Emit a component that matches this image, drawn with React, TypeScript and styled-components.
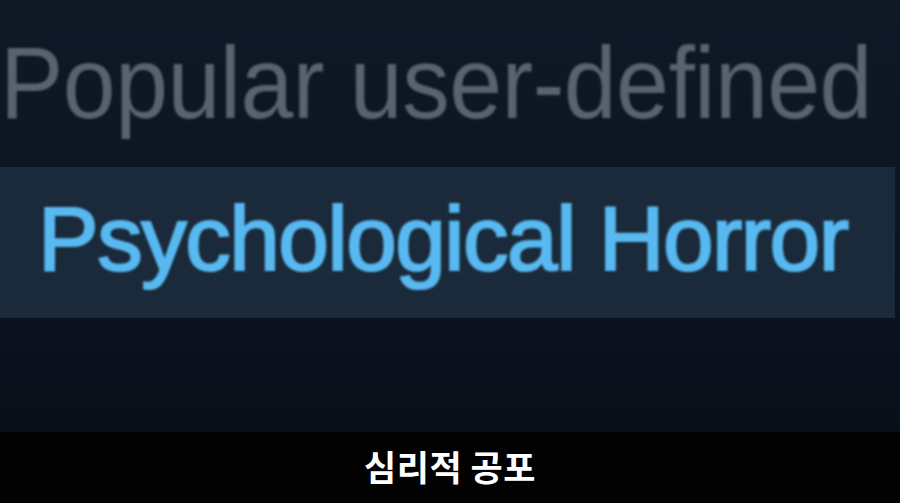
import React from "react";
import styled, { createGlobalStyle } from "styled-components";

const GlobalStyle = createGlobalStyle`
  html, body {
    margin: 0;
    padding: 0;
    background: #0b121d;
  }
`;

const Page = styled.div`
  width: 900px;
  height: 503px;
  overflow: hidden;
  display: flex;
  flex-direction: column;
  background: linear-gradient(180deg, #0f1826 0%, #0c1421 55%, #080f19 85%);
  font-family: "Liberation Sans", Arial, sans-serif;
`;

const Heading = styled.div`
  margin-top: 38px;
  font-size: 95px;
  line-height: 1;
  letter-spacing: -0.5px;
  color: #57636f;
  white-space: nowrap;
  transform: scaleY(1.07);
  transform-origin: 0 80px;
  filter: blur(0.9px);
`;

const TagBox = styled.div`
  margin-top: 34px;
  margin-right: 5px;
  height: 151px;
  box-sizing: border-box;
  padding: 26px 0 0 38px;
  background: #1b2a3a;
  display: flex;
  align-items: flex-start;
`;

const TagLabel = styled.span`
  font-size: 91px;
  line-height: 1;
  letter-spacing: -1.5px;
  color: #58b9f1;
  white-space: nowrap;
  -webkit-text-stroke: 2.2px #58b9f1;
  filter: blur(0.8px);
`;

const Spacer = styled.div`
  flex: 1;
`;

const Subtitle = styled.div`
  height: 71px;
  background: #020202;
  display: flex;
  align-items: center;
  justify-content: center;
  color: #ffffff;
  font-family: "Noto Sans CJK KR", "Noto Sans", sans-serif;
  font-weight: 700;
  font-size: 35px;
  letter-spacing: 0.5px;
  padding-bottom: 4px;
  box-sizing: border-box;
`;

export default function App() {
  return (
    <>
      <GlobalStyle />
      <Page>
        <Heading>Popular user-defined</Heading>
        <TagBox>
          <TagLabel>Psychological Horror</TagLabel>
        </TagBox>
        <Spacer />
        <Subtitle>심리적 공포</Subtitle>
      </Page>
    </>
  );
}
